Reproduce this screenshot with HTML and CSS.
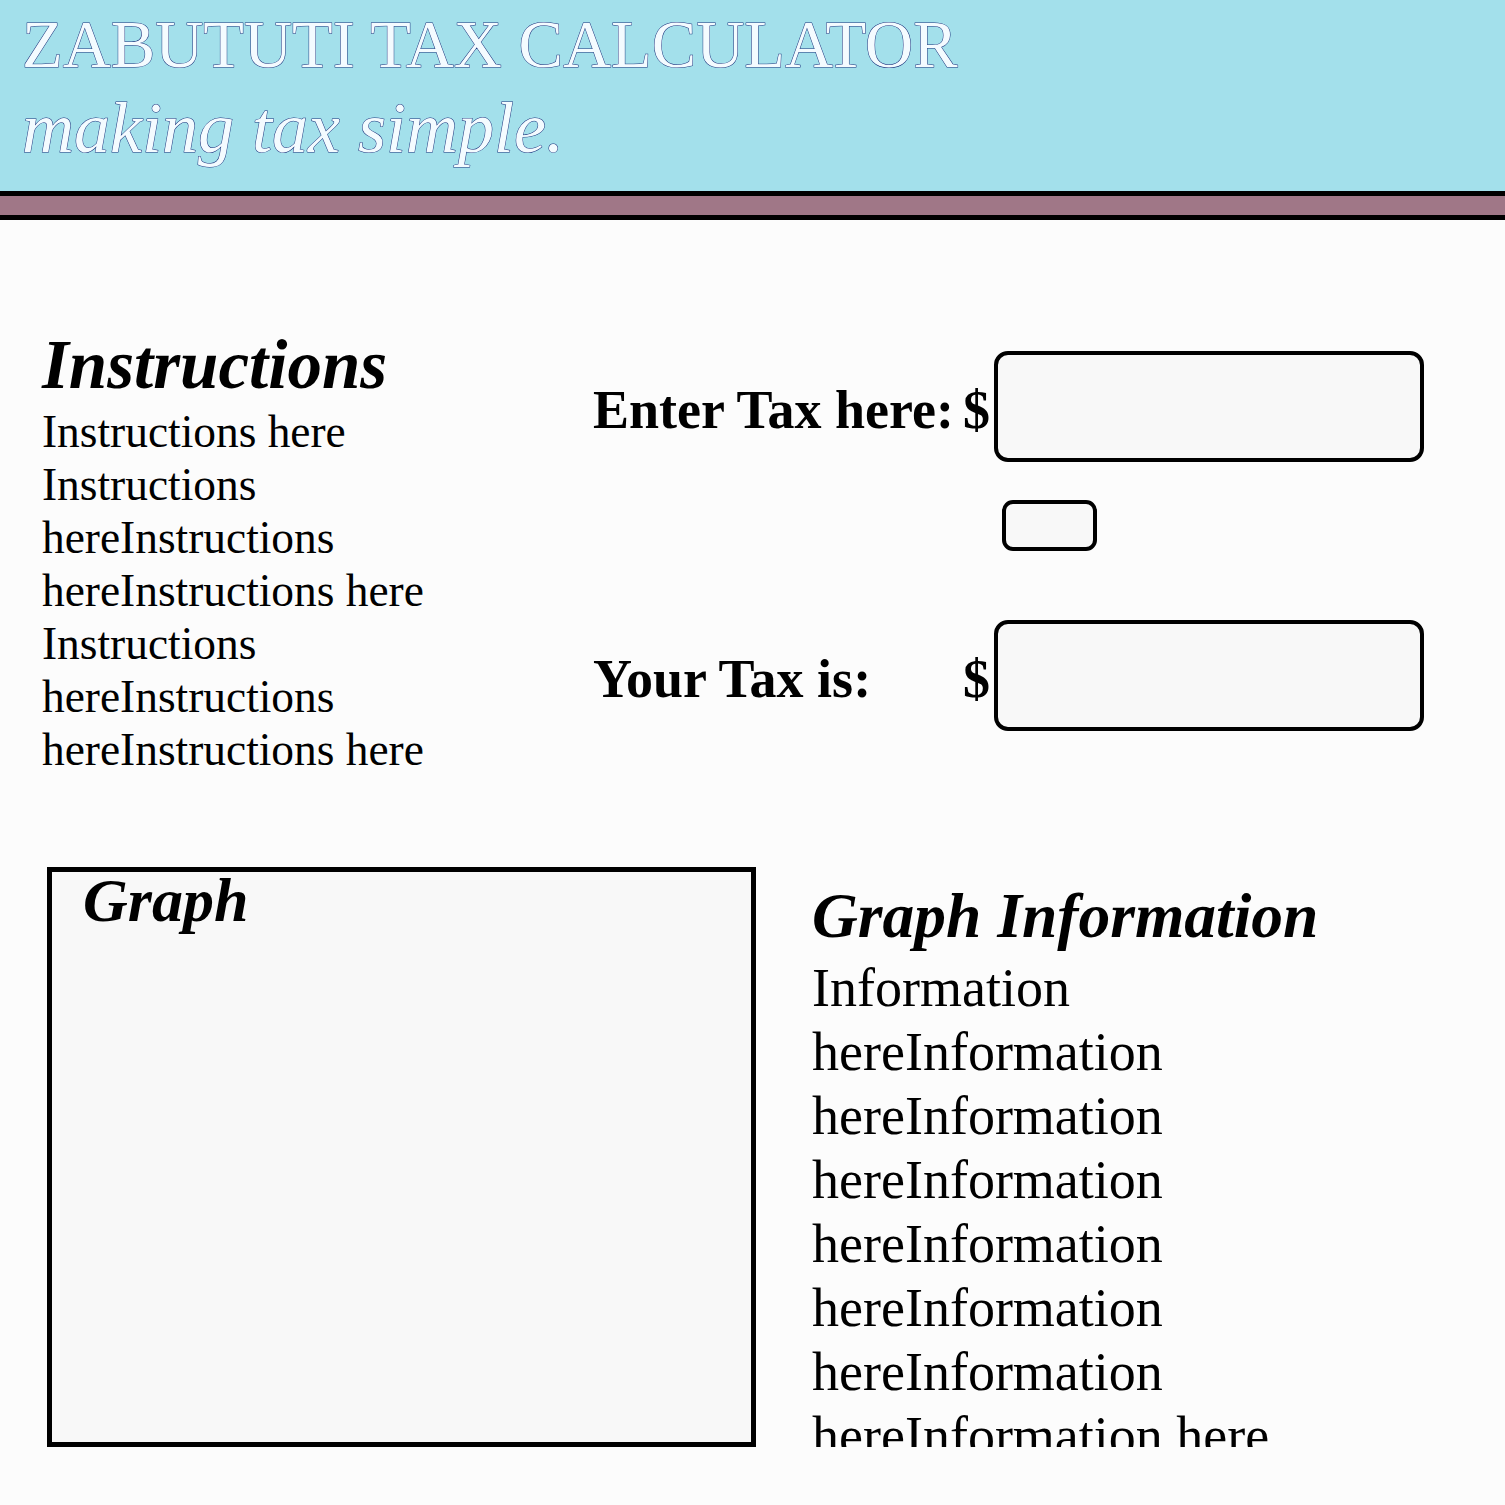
FILE: index.html
```html
<!DOCTYPE html>
<html lang="en">
<head>
<meta charset="utf-8">
<title>Zabututi Tax Calculator</title>
<link rel="stylesheet" href="styles.css">
</head>
<body>
<header class="site-header">
  <h1 class="title">ZABUTUTI TAX CALCULATOR</h1>
  <p class="tagline">making tax simple.</p>
</header>
<div class="stripe"></div>
<main class="content">
  <section class="top">
    <div class="instructions">
      <h2 class="section-title">Instructions</h2>
      <p class="body-text">Instructions here Instructions hereInstructions hereInstructions here Instructions hereInstructions hereInstructions here</p>
    </div>
    <form class="calc">
      <label class="calc-label row-in" for="tax-in">Enter Tax here:</label>
      <span class="dollar row-in">$</span>
      <input class="field row-in" id="tax-in" type="text">
      <button class="calc-btn row-btn" type="button"></button>
      <label class="calc-label row-out" for="tax-out">Your Tax is:</label>
      <span class="dollar row-out">$</span>
      <input class="field row-out" id="tax-out" type="text" readonly>
    </form>
  </section>
  <section class="bottom">
    <div class="graph">
      <h2 class="graph-title">Graph</h2>
    </div>
    <div class="info">
      <h2 class="info-title">Graph Information</h2>
      <p class="info-text">Information hereInformation hereInformation hereInformation hereInformation hereInformation hereInformation hereInformation here</p>
    </div>
  </section>
</main>
</body>
</html>
```
FILE: styles.css
```css
html, body {
  margin: 0;
  padding: 0;
}
body {
  background: #fcfcfc;
  font-family: "Liberation Serif", "Times New Roman", serif;
  color: #000;
}
.site-header {
  box-sizing: border-box;
  height: 196px;
  background: #a3e0eb;
  border-bottom: 5px solid #000;
  padding: 7px 0 0 22px;
}
.title {
  margin: 0;
  font-size: 66.6px;
  line-height: 76px;
  font-weight: normal;
  color: #f4fbff;
  -webkit-text-stroke: 1px #1a2f7a;
  paint-order: stroke fill;
}
.tagline {
  margin: 5px 0 0;
  font-size: 72px;
  line-height: 80px;
  font-style: italic;
  color: #f4fbff;
  -webkit-text-stroke: 1px #1a2f7a;
  paint-order: stroke fill;
}
.stripe {
  height: 19px;
  background: #a07787;
  border-bottom: 5px solid #000;
}
.top {
  display: flex;
  align-items: flex-start;
  margin-top: 107px;
}
.instructions {
  margin-left: 42px;
  width: 440px;
}
.section-title {
  margin: 0;
  font-size: 69px;
  line-height: 76px;
  font-weight: bold;
  font-style: italic;
}
.body-text {
  margin: 3px 0 0;
  font-size: 45.4px;
  line-height: 53px;
}
.calc {
  margin: 24px 0 0 111px;
  display: grid;
  grid-template-columns: auto auto 430px;
  grid-template-rows: 111px 38px 51px 69px 111px;
  align-items: center;
}
.row-in { grid-row: 1; }
.row-btn { grid-row: 3; grid-column: 3; }
.row-out { grid-row: 5; }
.calc-btn {
  width: 95px;
  height: 51px;
  margin: 0 0 0 8px;
  box-sizing: border-box;
  border: 4px solid #000;
  border-radius: 11px;
  background: #f8f8f8;
  padding: 0;
}
.calc-label,
.dollar {
  font-size: 54px;
  line-height: 60px;
  font-weight: bold;
  padding-top: 6px;
}
.calc-label {
  padding-right: 9px;
}
.dollar {
  padding-right: 4px;
}
.field {
  box-sizing: border-box;
  width: 430px;
  height: 111px;
  margin: 0;
  border: 4px solid #000;
  border-radius: 14px;
  background: #f8f8f8;
  font-family: inherit;
  font-size: 40px;
  padding: 0 14px;
  outline: none;
}
.bottom {
  display: flex;
  align-items: flex-start;
  margin-top: 90px;
}
.graph {
  box-sizing: border-box;
  margin-left: 47px;
  width: 709px;
  height: 580px;
  border: 5px solid #000;
  background: #f8f8f8;
  padding: 3px 0 0 31px;
}
.graph-title {
  margin: 0;
  font-size: 62px;
  line-height: 50px;
  font-weight: bold;
  font-style: italic;
}
.info {
  box-sizing: border-box;
  margin-left: 56px;
  width: 560px;
  height: 580px;
  overflow: hidden;
  padding-top: 18px;
}
.info-title {
  margin: 0;
  font-size: 63.5px;
  line-height: 62px;
  font-weight: bold;
  font-style: italic;
}
.info-text {
  margin: 9px 0 0;
  font-size: 54px;
  line-height: 64px;
}
```
